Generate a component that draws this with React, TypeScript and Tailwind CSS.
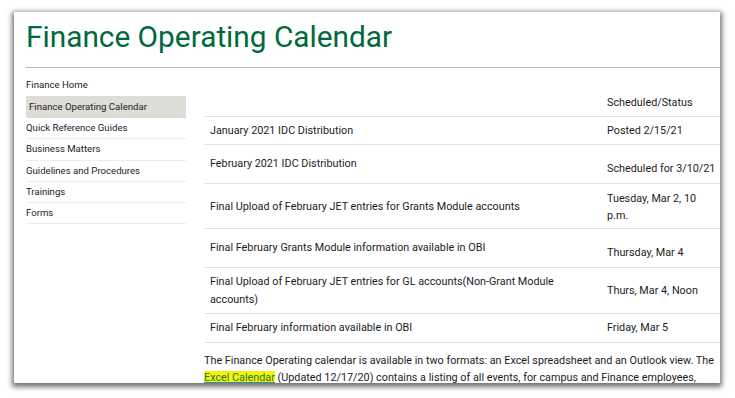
const navItems = [
    { label: 'Finance Home', active: false, line: false },
    { label: 'Finance Operating Calendar', active: true, line: false },
    { label: 'Quick Reference Guides', active: false, line: true },
    { label: 'Business Matters', active: false, line: true },
    { label: 'Guidelines and Procedures', active: false, line: true },
    { label: 'Trainings', active: false, line: true },
    { label: 'Forms', active: false, line: true },
];

const App = () => {
    return (
        <div className="w-[735px] h-[398px] bg-white pl-[14px] pt-[12px] font-['Roboto',sans-serif] text-[#1c1c1c]">
            <div className="w-[706px] h-[371px] bg-white overflow-hidden shadow-[0_2px_5px_2px_rgba(0,0,0,0.55)]">
                <div className="pl-[12px] pt-[7px]">
                    <h1 className="text-[29.8px] leading-[36px] text-[#00693e]">
                        Finance Operating Calendar
                    </h1>
                    <div className="mt-[12px] border-t border-[#b4b4ac]"></div>

                    <div className="flex">
                        {/* sidebar */}
                        <nav className="w-[160px] pt-[7px] text-[9.6px]">
                            {navItems.map((item) => (
                                <div
                                    key={item.label}
                                    className={
                                        item.active
                                            ? 'h-[22px] flex items-center pl-[3px] bg-[#dddcd7]'
                                            : item.line
                                              ? 'h-[21.3px] flex items-center border-b border-[#ececea]'
                                              : 'h-[21px] flex items-center'
                                    }
                                >
                                    {item.label}
                                </div>
                            ))}
                        </nav>

                        {/* table + text */}
                        <div className="ml-[18px] flex-1 pt-[20px] text-[10.8px]">
                            <div className="h-[29px] pt-[2px] flex items-center border-b border-[#e2e2e2]">
                                <div className="w-[397px]"></div>
                                <div className="pl-[6px]">Scheduled/Status</div>
                            </div>
                            <div className="h-[28px] pt-[2px] flex items-center border-b border-[#e2e2e2]">
                                <div className="w-[397px] pl-[6px]">January 2021 IDC Distribution</div>
                                <div className="pl-[6px]">Posted 2/15/21</div>
                            </div>
                            <div className="h-[39px] pt-[1px] flex items-center border-b border-[#e2e2e2]">
                                <div className="w-[397px] pl-[6px]">February 2021 IDC Distribution</div>
                                <div className="pl-[6px] pt-[10px]">Scheduled for 3/10/21</div>
                            </div>
                            <div className="h-[45px] pt-[1px] flex items-center border-b border-[#e2e2e2] leading-[17px]">
                                <div className="w-[397px] pl-[6px]">
                                    Final Upload of February JET entries for Grants Module accounts
                                </div>
                                <div className="pl-[6px]">
                                    Tuesday, Mar 2, 10
                                    <br />
                                    p.m.
                                </div>
                            </div>
                            <div className="h-[39px] pt-[1px] flex items-center border-b border-[#e2e2e2]">
                                <div className="w-[397px] pl-[6px]">
                                    Final February Grants Module information available in OBI
                                </div>
                                <div className="pl-[6px] pt-[9px]">Thursday, Mar 4</div>
                            </div>
                            <div className="h-[46px] pt-[1px] flex items-center border-b border-[#e2e2e2] leading-[18px]">
                                <div className="w-[397px] pl-[6px]">
                                    Final Upload of February JET entries for GL accounts(Non-Grant Module
                                    <br />
                                    accounts)
                                </div>
                                <div className="pl-[6px]">Thurs, Mar 4, Noon</div>
                            </div>
                            <div className="h-[29px] pt-[1px] flex items-center border-b border-[#e2e2e2]">
                                <div className="w-[397px] pl-[6px]">Final February information available in OBI</div>
                                <div className="pl-[6px]">Friday, Mar 5</div>
                            </div>

                            <p className="mt-[9px] leading-[17px] whitespace-nowrap">
                                The Finance Operating calendar is available in two formats: an Excel spreadsheet and an Outlook view. The
                                <br />
                                <a className="text-[#1f7a2e] underline decoration-[#3a8a9a] bg-[#f3f30c]">Excel Calendar</a>
                                {' '}(Updated 12/17/20) contains a listing of all events, for campus and Finance employees,
                            </p>
                        </div>
                    </div>
                </div>
            </div>
        </div>
    );
};

export default App;
